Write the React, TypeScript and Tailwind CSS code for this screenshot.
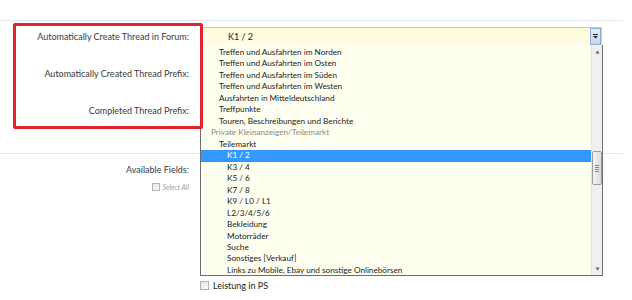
import { type FC } from "react";

const items: { label: string; kind: "item" | "group" | "sub" | "selected" }[] = [
  { label: "Treffen und Ausfahrten im Norden", kind: "item" },
  { label: "Treffen und Ausfahrten im Osten", kind: "item" },
  { label: "Treffen und Ausfahrten im Süden", kind: "item" },
  { label: "Treffen und Ausfahrten im Westen", kind: "item" },
  { label: "Ausfahrten in Mitteldeutschland", kind: "item" },
  { label: "Treffpunkte", kind: "item" },
  { label: "Touren, Beschreibungen und Berichte", kind: "item" },
  { label: "Private Kleinanzeigen/Teilemarkt", kind: "group" },
  { label: "Teilemarkt", kind: "item" },
  { label: "K1 / 2", kind: "selected" },
  { label: "K3 / 4", kind: "sub" },
  { label: "K5 / 6", kind: "sub" },
  { label: "K7 / 8", kind: "sub" },
  { label: "K9 / L0 / L1", kind: "sub" },
  { label: "L2/3/4/5/6", kind: "sub" },
  { label: "Bekleidung", kind: "sub" },
  { label: "Motorräder", kind: "sub" },
  { label: "Suche", kind: "sub" },
  { label: "Sonstiges [Verkauf]", kind: "sub" },
  { label: "Links zu Mobile, Ebay und sonstige Onlinebörsen", kind: "sub" },
];

const Checkbox: FC<{ small?: boolean }> = ({ small }) => (
  <span
    className={`inline-block shrink-0 border border-[#b5b5b5] bg-gradient-to-br from-[#e6e6e6] to-[#fafafa] ${small ? "w-[8px] h-[8px]" : "w-[9px] h-[9px]"}`}
  />
);

const DropdownList: FC = () => (
  <div className="absolute left-[200px] top-[45px] w-[403px] h-[231px] flex bg-[#fffff0] border-l border-r border-b border-[#6e6e6e] text-[8.2px]">
    <ul className="flex-1 pt-[2px]">
      {items.map((it) => (
        <li
          key={it.label}
          className={`h-[11.47px] leading-[11.47px] whitespace-nowrap ${
            it.kind === "group"
              ? "pl-[10px] text-[#8a8a8a]"
              : it.kind === "item"
              ? "pl-[18px] text-[#222]"
              : it.kind === "selected"
              ? "pl-[26px] bg-[#3399ff] text-white"
              : "pl-[26px] text-[#222]"
          }`}
        >
          {it.label}
        </li>
      ))}
    </ul>
    {/* scrollbar */}
    <div className="w-[11px] bg-[#f0f0f0] border-l border-[#e6e6e6] flex flex-col items-center">
      <svg width="5" height="4" viewBox="0 0 5 4" className="mt-[5px]">
        <path d="M2.5 0.5 L4.5 3.5 L0.5 3.5 Z" fill="#606060" />
      </svg>
      <div className="mt-[97px] w-[10px] h-[34px] rounded-[2px] border border-[#9c9c9c] bg-gradient-to-r from-[#f2f2f2] to-[#dcdcdc] flex flex-col items-center justify-center gap-[1px]">
        <span className="w-[4px] h-[1px] bg-[#8a8a8a]" />
        <span className="w-[4px] h-[1px] bg-[#8a8a8a]" />
        <span className="w-[4px] h-[1px] bg-[#8a8a8a]" />
        <span className="w-[4px] h-[1px] bg-[#8a8a8a]" />
      </div>
      <svg width="5" height="4" viewBox="0 0 5 4" className="mt-auto mb-[4px]">
        <path d="M0.5 0.5 L4.5 0.5 L2.5 3.5 Z" fill="#606060" />
      </svg>
    </div>
  </div>
);

export default function App() {
  return (
    <div
      className="relative w-[632px] h-[300px] bg-white overflow-hidden text-[9px] text-[#3a3a3a]"
      style={{ fontFamily: "Lato, 'Open Sans', sans-serif" }}
    >
      <div className="h-[20px]" />
      <div className="w-[623px] border-t border-[#e4e9ef]">
        {/* thread options */}
        <div className="grid grid-cols-[189px_1fr] gap-x-[11px] gap-y-0 pt-[6px] pb-[15px]">
          <div className="h-[37px] pt-[3px] text-right">Automatically Create Thread in Forum:</div>
          <div>
            <div className="w-[402px] h-[19px] flex items-center border border-[#c9c9c9] bg-gradient-to-b from-[#fffbd6] to-[#fffde8]">
              <span className="pl-[27px] flex-1 text-[#222]">K1 / 2</span>
              <span className="w-[11px] h-[17px] flex items-center justify-center border border-[#8fb0d3] bg-gradient-to-b from-[#e3eefa] to-[#c3d9f0]">
                <svg width="5" height="5" viewBox="0 0 5 5">
                  <rect x="0" y="0" width="5" height="1" fill="#222" />
                  <path d="M0 2 L5 2 L2.5 4.5 Z" fill="#222" />
                </svg>
              </span>
            </div>
          </div>
          <div className="h-[37px] pt-[3px] text-right">Automatically Created Thread Prefix:</div>
          <div />
          <div className="h-[37px] pt-[3px] text-right">Completed Thread Prefix:</div>
          <div />
        </div>
        {/* custom fields */}
        <div className="border-t border-[#e4e9ef] grid grid-cols-[189px_1fr] gap-x-[11px] pt-[10px]">
          <div className="text-right">
            <div className="h-[12px] leading-[12px]">Available Fields:</div>
            <div className="mt-[6px] flex items-center justify-end gap-[3px] text-[7px] italic text-[#a0a0a0]">
              <Checkbox small />
              <span>Select All</span>
            </div>
          </div>
          <div className="pt-[115px] flex items-center gap-[4px] text-[#222]">
            <Checkbox />
            <span>Leistung in PS</span>
          </div>
        </div>
      </div>

      <DropdownList />

      {/* annotation box */}
      <div className="absolute left-[13px] top-[23px] w-[190px] h-[106px] border-[3px] border-[#e0242e] rounded-[2px] pointer-events-none" />
    </div>
  );
}
